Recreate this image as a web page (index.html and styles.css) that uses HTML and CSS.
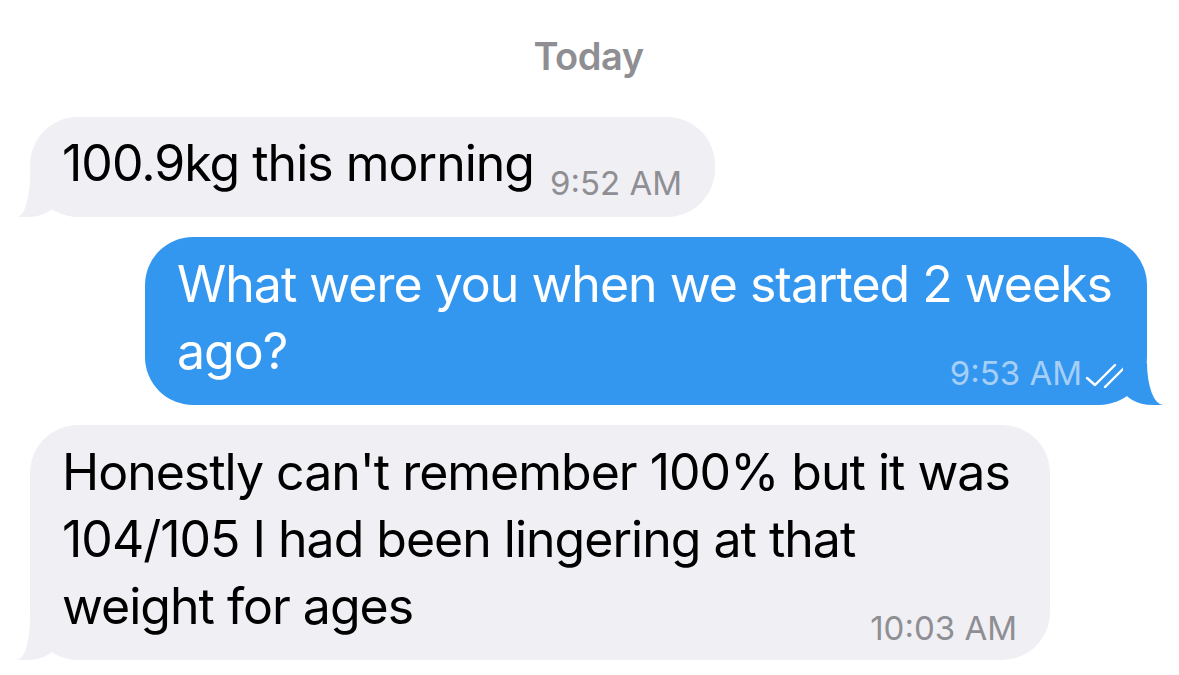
FILE: index.html
```html
<!DOCTYPE html>
<html lang="en">
<head>
    <meta charset="UTF-8">
    <meta name="viewport" content="width=device-width, initial-scale=1.0">
    <title>Messages</title>
    <link rel="stylesheet" href="styles.css">
</head>
<body>
    <main class="thread">
        <div class="day">Today</div>

        <div class="bubble bubble-in">
            100.9kg this morning<span class="meta">9:52 AM</span>
        </div>

        <div class="bubble bubble-out multi">
            What were you when we started 2 weeks ago?<span class="meta">9:53 AM<svg class="ticks" width="44" height="26" viewBox="0 0 44 26"><path d="M2 16 L10 23 L30 3" /><path d="M20 25 L42 3" /></svg></span>
        </div>

        <div class="bubble bubble-in multi">
            Honestly can't remember 100% but it was 104/105 I had been lingering at that weight for ages<span class="meta">10:03 AM</span>
        </div>
    </main>
</body>
</html>
```

FILE: styles.css
```css
body {
    margin: 0;
    padding: 0;
    background-color: #ffffff;
    font-family: Inter, "Noto Sans", sans-serif;
}

.thread {
    display: flex;
    flex-direction: column;
    gap: 20px;
    padding: 32px 32px 0 30px;
}

.day {
    align-self: center;
    margin-bottom: 17px;
    color: #8e8e93;
    font-size: 38px;
    font-weight: 600;
    line-height: 48px;
    letter-spacing: -0.5px;
}

.bubble {
    position: relative;
    max-width: 955px;
    padding: 13px 33px 19px 32px;
    border-radius: 48px;
    font-size: 50px;
    line-height: 67px;
    letter-spacing: -1px;
}

.bubble.multi {
    padding-top: 14px;
    padding-bottom: 17px;
}

.bubble-in {
    align-self: flex-start;
    background-color: #f0eff4;
    color: #000000;
}

.bubble-out {
    align-self: flex-end;
    max-width: 952px;
    background-color: #3497ef;
    color: #ffffff;
}

.bubble-out.multi {
    padding-right: 18px;
}

/* tails */
.bubble::before,
.bubble::after {
    content: "";
    position: absolute;
    bottom: 0;
    height: 42px;
}

.bubble-in::before {
    left: -13px;
    width: 40px;
    background-color: #f0eff4;
    border-bottom-right-radius: 30px 18px;
}

.bubble-in::after {
    left: -40px;
    width: 40px;
    background-color: #ffffff;
    border-bottom-right-radius: 13px 42px;
}

.bubble-out::before {
    right: -16px;
    width: 40px;
    background-color: #3497ef;
    border-bottom-left-radius: 30px 18px;
}

.bubble-out::after {
    right: -40px;
    width: 40px;
    background-color: #ffffff;
    border-bottom-left-radius: 16px 42px;
}

.meta {
    float: right;
    margin: 38px 0 0 16px;
    font-size: 33px;
    line-height: 30px;
    letter-spacing: 0;
    color: #8e8e93;
}

.multi .meta {
    margin-top: 40px;
}

.bubble-out .meta {
    color: #a6cff7;
}

.ticks {
    margin-left: 3px;
    vertical-align: -3px;
}

.ticks path {
    fill: none;
    stroke: #ffffff;
    stroke-width: 2.4;
    stroke-linecap: round;
    stroke-linejoin: round;
}
```
